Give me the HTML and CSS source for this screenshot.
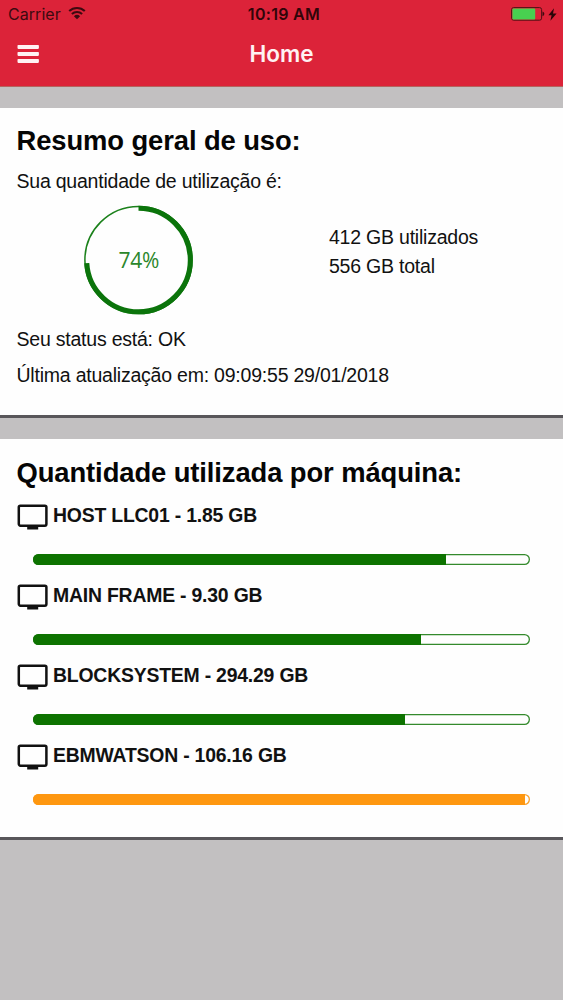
FILE: index.html
```html
<!DOCTYPE html>
<html lang="pt-BR">
<head>
<meta charset="utf-8">
<meta name="viewport" content="width=device-width, initial-scale=1">
<title>Home</title>
<link rel="stylesheet" href="styles.css">
</head>
<body>
<header class="header">
  <div class="status">
    <div class="status-left">
      <span class="carrier">Carrier</span>
      <svg class="wifi" width="18" height="14" viewBox="0 0 18 14" fill="none" stroke="#3d0a10" stroke-width="2.1">
        <path d="M1.2 5.1a11.3 11.3 0 0 1 15.6 0M3.9 8a7.4 7.4 0 0 1 10.2 0"/>
        <path d="M9 13.2L5.9 10.2a4.6 4.6 0 0 1 6.2 0z" fill="#3d0a10" stroke="none"/>
      </svg>
    </div>
    <span class="time">10:19 AM</span>
    <div class="status-right">
      <svg width="34" height="14" viewBox="0 0 34 14">
        <rect x=".6" y=".6" width="30" height="12.6" rx="2" fill="none" stroke="#4f1014" stroke-width="1"/>
        <rect x="1.4" y="1.4" width="22.8" height="11" rx="1" fill="#48d050"/>
        <path d="M31.5 4.6c2.4.8 2.4 3.8 0 4.6z" fill="#3d0a10"/>
      </svg>
      <svg width="9" height="13" viewBox="0 0 9 13"><path d="M6 .2L.4 7.2h3.2L2.4 12.8 8.6 5.4H5z" fill="#2a0508"/></svg>
    </div>
  </div>
  <div class="nav">
    <svg class="menu" width="22" height="20" viewBox="0 0 22 20" fill="#fff2f3">
      <rect x=".5" y="0.9" width="21.4" height="4" rx=".8"/><rect x=".5" y="7.9" width="21.4" height="4" rx=".8"/><rect x=".5" y="14.9" width="21.4" height="4" rx=".8"/>
    </svg>
    <h1 class="title">Home</h1>
  </div>
</header>
<main class="content">
  <section class="card summary">
    <h2 class="heading">Resumo geral de uso:</h2>
    <p class="text intro">Sua quantidade de utilização é:</p>
    <div class="usage">
      <svg class="ring" width="110" height="110" viewBox="0 0 110 110">
        <circle cx="54.5" cy="55" r="53.6" fill="none" stroke="#1b811b" stroke-width="1.5"/>
        <circle cx="54.5" cy="55" r="51.8" fill="none" stroke="#0b740b" stroke-width="5" pathLength="100" stroke-dasharray="74 26" transform="rotate(-90 54.5 55)"/>
        <text class="percent" x="54.8" y="62.8" text-anchor="middle">74%</text>
      </svg>
      <div class="totals">
        <p class="text">412 GB utilizados</p>
        <p class="text">556 GB total</p>
      </div>
    </div>
    <p class="text state">Seu status está: OK</p>
    <p class="text updated">Última atualização em: 09:09:55 29/01/2018</p>
  </section>
  <section class="card machines">
    <h2 class="heading">Quantidade utilizada por máquina:</h2>
    <svg width="0" height="0" class="defs"><defs><symbol id="monitor" viewBox="0 0 31 26">
      <rect x="1.8" y="1.7" width="27.6" height="20" rx="1.6" fill="none" stroke="#111" stroke-width="2.5"/>
      <rect x="10.2" y="21.5" width="11" height="4" fill="#111"/></symbol></defs></svg>
    <ul class="list">
      <li class="machine">
        <div class="label"><svg class="icon"><use href="#monitor"/></svg><span>HOST LLC01 - 1.85 GB</span></div>
        <div class="bar"><div class="fill" style="width:83.2%"></div></div>
      </li>
      <li class="machine">
        <div class="label"><svg class="icon"><use href="#monitor"/></svg><span>MAIN FRAME - 9.30 GB</span></div>
        <div class="bar"><div class="fill" style="width:78%"></div></div>
      </li>
      <li class="machine">
        <div class="label"><svg class="icon"><use href="#monitor"/></svg><span>BLOCKSYSTEM - 294.29 GB</span></div>
        <div class="bar"><div class="fill" style="width:74.8%"></div></div>
      </li>
      <li class="machine">
        <div class="label"><svg class="icon"><use href="#monitor"/></svg><span>EBMWATSON - 106.16 GB</span></div>
        <div class="bar warning"><div class="fill" style="width:99%"></div></div>
      </li>
    </ul>
  </section>
</main>
</body>
</html>
```
FILE: styles.css
```css
* { box-sizing: border-box; margin: 0; padding: 0; }
body {
  min-height: 1000px;
  background: #c2c0c1;
  color: #111;
  font-family: "Liberation Sans", Arial, sans-serif;
}
svg { display: block; }
.header {
  height: 87px;
  background: #dc2339;
  border-bottom: 1px solid #b5645f;
}
.status {
  display: grid;
  grid-template-columns: 1fr auto 1fr;
  align-items: center;
  height: 28px;
  padding: 0 6px 0 8px;
  font-family: Inter, sans-serif;
  font-size: 16px;
  line-height: 28px;
  color: #3d0a10;
}
.status-left { display: flex; align-items: center; gap: 7px; }
.carrier { letter-spacing: .05px; }
.wifi { margin-bottom: 2px; }
.time { font-weight: 600; letter-spacing: .3px; color: #300509; margin-left: 3px; }
.status-right { display: flex; align-items: center; justify-content: flex-end; gap: 3px; }
.nav {
  display: grid;
  grid-template-columns: 1fr auto 1fr;
  align-items: center;
  height: 52px;
  padding: 0 17px;
}
.menu { margin-bottom: 1px; }
.title {
  font: 600 22.5px/52px Inter, sans-serif;
  letter-spacing: -.05px;
  color: #fff2f3;
}
.content { padding-top: 21px; }
.card { background: #fefefe; border-bottom: 3px solid #58565a; padding: 0 17px 0 16.5px; }
.summary { height: 310px; padding-top: 15px; margin-bottom: 21px; }
.heading { font-size: 27.4px; line-height: 36px; font-weight: 700; letter-spacing: -.1px; color: #050505; white-space: nowrap; }
.text { font-size: 19.5px; line-height: 29px; letter-spacing: -.22px; white-space: nowrap; }
.intro { margin-top: 8px; }
.usage { display: flex; align-items: flex-start; margin: 9px 0 10px 67.5px; }
.totals { margin: 17.5px 0 0 135px; }
.percent { font: 400 21px "Open Sans", sans-serif; letter-spacing: -.2px; fill: #2b872b; }
.updated { margin-top: 7px; }
.machines { height: 401px; padding-top: 16px; }
.list { list-style: none; padding-top: 6px; }
.machine { height: 80.1px; }
.label { display: flex; gap: 5.5px; font-size: 19.4px; line-height: 36px; font-weight: 700; letter-spacing: -.2px; white-space: nowrap; }
.icon { width: 31px; height: 26px; margin-top: 7px; }
.bar {
  height: 11px;
  margin: 21px 16px 0;
  border-radius: 6px;
  box-shadow: inset 0 0 0 1.3px #348a2c;
  overflow: hidden;
}
.fill { height: 100%; background: #0d7300; }
.warning { box-shadow: inset 0 0 0 1.3px #f9a12c; }
.warning .fill { background: #fe9710; }
```
